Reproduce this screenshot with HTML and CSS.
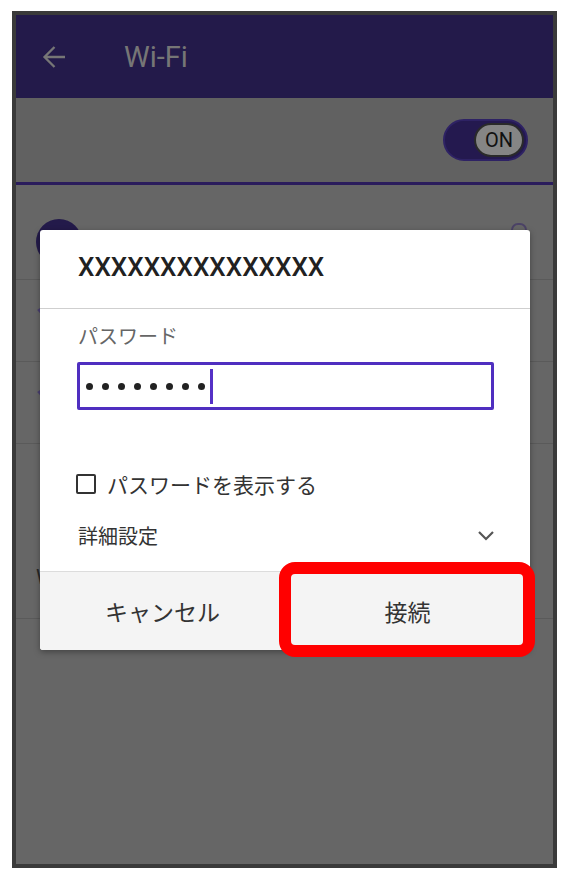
FILE: index.html
```html
<!DOCTYPE html>
<html lang="ja">
<head>
    <meta charset="UTF-8">
    <meta name="viewport" content="width=device-width, initial-scale=1.0">
    <title>Wi-Fi</title>
    <link rel="stylesheet" href="styles.css">
</head>
<body>
    <div class="phone">
        <div class="app-bar">
            <svg class="back-icon" viewBox="0 0 24 24" width="24" height="24">
                <path d="M23 12H2.5M12.5 2L2.5 12l10 10"/>
            </svg>
            <span class="app-title">Wi-Fi</span>
        </div>

        <div class="switch-row">
            <div class="toggle">
                <span class="toggle-knob">ON</span>
            </div>
        </div>
        <div class="accent-line"></div>

        <div class="network-list">
            <div class="net-row first">
                <span class="avatar"></span>
                <span class="lock-ring"></span>
            </div>
            <div class="net-row">
                <svg class="wifi-icon" viewBox="0 0 24 24" width="28" height="28">
                    <path d="M12 21L1 8.5C4 6 7.8 4.5 12 4.5S20 6 23 8.5z"/>
                </svg>
            </div>
            <div class="net-row">
                <svg class="wifi-icon" viewBox="0 0 24 24" width="28" height="28">
                    <path d="M12 21L1 8.5C4 6 7.8 4.5 12 4.5S20 6 23 8.5z"/>
                </svg>
            </div>
            <div class="net-row tall">
                <span class="row-text">Wi-Fi詳細設定</span>
            </div>
        </div>

        <div class="dialog">
            <div class="dialog-title">XXXXXXXXXXXXXXX</div>
            <div class="dialog-body">
                <div class="field-label">パスワード</div>
                <div class="password-box">
                    <span class="dot"></span><span class="dot"></span><span class="dot"></span><span class="dot"></span>
                    <span class="dot"></span><span class="dot"></span><span class="dot"></span><span class="dot"></span>
                    <span class="caret"></span>
                </div>
                <div class="check-row">
                    <span class="checkbox"></span>
                    <span>パスワードを表示する</span>
                </div>
                <div class="advanced-row">
                    <span>詳細設定</span>
                    <svg class="chevron" viewBox="0 0 18 11" width="18" height="11">
                        <polyline points="2,2 9,9 16,2"/>
                    </svg>
                </div>
            </div>
            <div class="dialog-actions">
                <button class="action-btn">キャンセル</button>
                <button class="action-btn">接続</button>
            </div>
        </div>

        <div class="highlight"></div>
    </div>
</body>
</html>
```

FILE: styles.css
```css
body {
    margin: 0;
    background: #fff;
    font-family: Roboto, "Noto Sans CJK JP", sans-serif;
}

.phone {
    position: relative;
    box-sizing: border-box;
    width: 545px;
    height: 857px;
    margin: 11px 0 0 12px;
    border: 4px solid #3a3a3a;
    background: #666;
    overflow: hidden;
}

/* app bar (dimmed by the dialog scrim) */
.app-bar {
    display: flex;
    align-items: center;
    height: 83px;
    padding-left: 26px;
    background: #231a4a;
}

.back-icon {
    fill: none;
    stroke: #767676;
    stroke-width: 2.3;
}

.app-title {
    margin-left: 58px;
    font-size: 29px;
    color: #767676;
}

.switch-row {
    display: flex;
    justify-content: flex-end;
    align-items: center;
    height: 84px;
    padding-right: 25px;
    background: #616161;
}

.toggle {
    display: flex;
    justify-content: flex-end;
    align-items: center;
    box-sizing: border-box;
    width: 85px;
    height: 42px;
    padding-right: 2px;
    border: 2px solid #2e2264;
    border-radius: 21px;
    background: #24194f;
}

.toggle-knob {
    display: flex;
    justify-content: center;
    align-items: center;
    box-sizing: border-box;
    width: 50px;
    height: 34px;
    border: 2px solid #2a2a2a;
    border-radius: 17px;
    background: #858585;
    font-size: 20px;
    color: #111;
}

.accent-line {
    height: 3px;
    background: #2a1c5c;
}

.network-list .net-row {
    position: relative;
    display: flex;
    align-items: center;
    height: 81px;
    padding-left: 20px;
    border-bottom: 1px solid #5a5a5a;
}

.network-list .net-row.first {
    align-items: flex-start;
    height: 94px;
}

.network-list .net-row.tall {
    align-items: flex-end;
    height: 175px;
    padding-bottom: 28px;
    box-sizing: border-box;
}

.avatar {
    width: 46px;
    height: 46px;
    margin-top: 34px;
    border-radius: 50%;
    background: #231a4a;
}

.lock-ring {
    position: absolute;
    top: 38px;
    right: 26px;
    width: 12px;
    height: 14px;
    border: 2px solid #4b4266;
    border-radius: 7px 7px 0 0;
}

.wifi-icon {
    margin-top: -14px;
    fill: #4a3f72;
}

.row-text {
    font-size: 20px;
    color: #262626;
}

/* dialog */
.dialog {
    position: absolute;
    left: 24px;
    top: 215px;
    width: 490px;
    border-radius: 3px;
    background: #fff;
    box-shadow: 0 2px 6px rgba(0, 0, 0, 0.35);
    overflow: hidden;
}

.dialog-title {
    box-sizing: border-box;
    height: 79px;
    padding: 22px 0 0 38px;
    border-bottom: 1px solid #cfcfcf;
    font-size: 26px;
    font-weight: 500;
    line-height: 30px;
    color: #212121;
}

.dialog-body {
    display: flex;
    flex-direction: column;
    height: 262px;
    padding: 0 35px 0 37px;
    box-sizing: border-box;
}

.field-label {
    margin: 16px 0 0 1px;
    font-size: 20px;
    line-height: 24px;
    color: #666;
}

.password-box {
    display: flex;
    align-items: center;
    gap: 9px;
    box-sizing: border-box;
    width: 417px;
    height: 48px;
    margin-top: 13px;
    padding-left: 6px;
    border: 3px solid #4f2fc0;
    border-radius: 2px;
}

.dot {
    width: 7px;
    height: 7px;
    border-radius: 50%;
    background: #222;
}

.caret {
    width: 3px;
    height: 35px;
    margin-left: -4px;
    background: #5531c6;
}

.check-row {
    display: flex;
    align-items: center;
    gap: 11px;
    height: 30px;
    margin: 59px 0 0 -1px;
    font-size: 21px;
    color: #333;
}

.checkbox {
    box-sizing: border-box;
    width: 20px;
    height: 20px;
    border: 2.5px solid #333;
    border-radius: 2px;
}

.advanced-row {
    display: flex;
    justify-content: space-between;
    align-items: center;
    height: 30px;
    margin-top: 21px;
    padding-left: 1px;
    font-size: 20px;
    color: #333;
}

.chevron {
    fill: none;
    stroke: #555;
    stroke-width: 2.2;
}

.dialog-actions {
    display: flex;
    height: 78px;
    border-top: 1px solid #dcdcdc;
    background: #f4f4f4;
}

.action-btn {
    flex: 1;
    border: none;
    background: transparent;
    font-family: inherit;
    font-size: 23px;
    color: #333;
}

/* red annotation frame around the connect button */
.highlight {
    position: absolute;
    left: 263px;
    top: 547px;
    box-sizing: border-box;
    width: 256px;
    height: 95px;
    border: 12px solid #ff0000;
    border-radius: 16px;
}
```
